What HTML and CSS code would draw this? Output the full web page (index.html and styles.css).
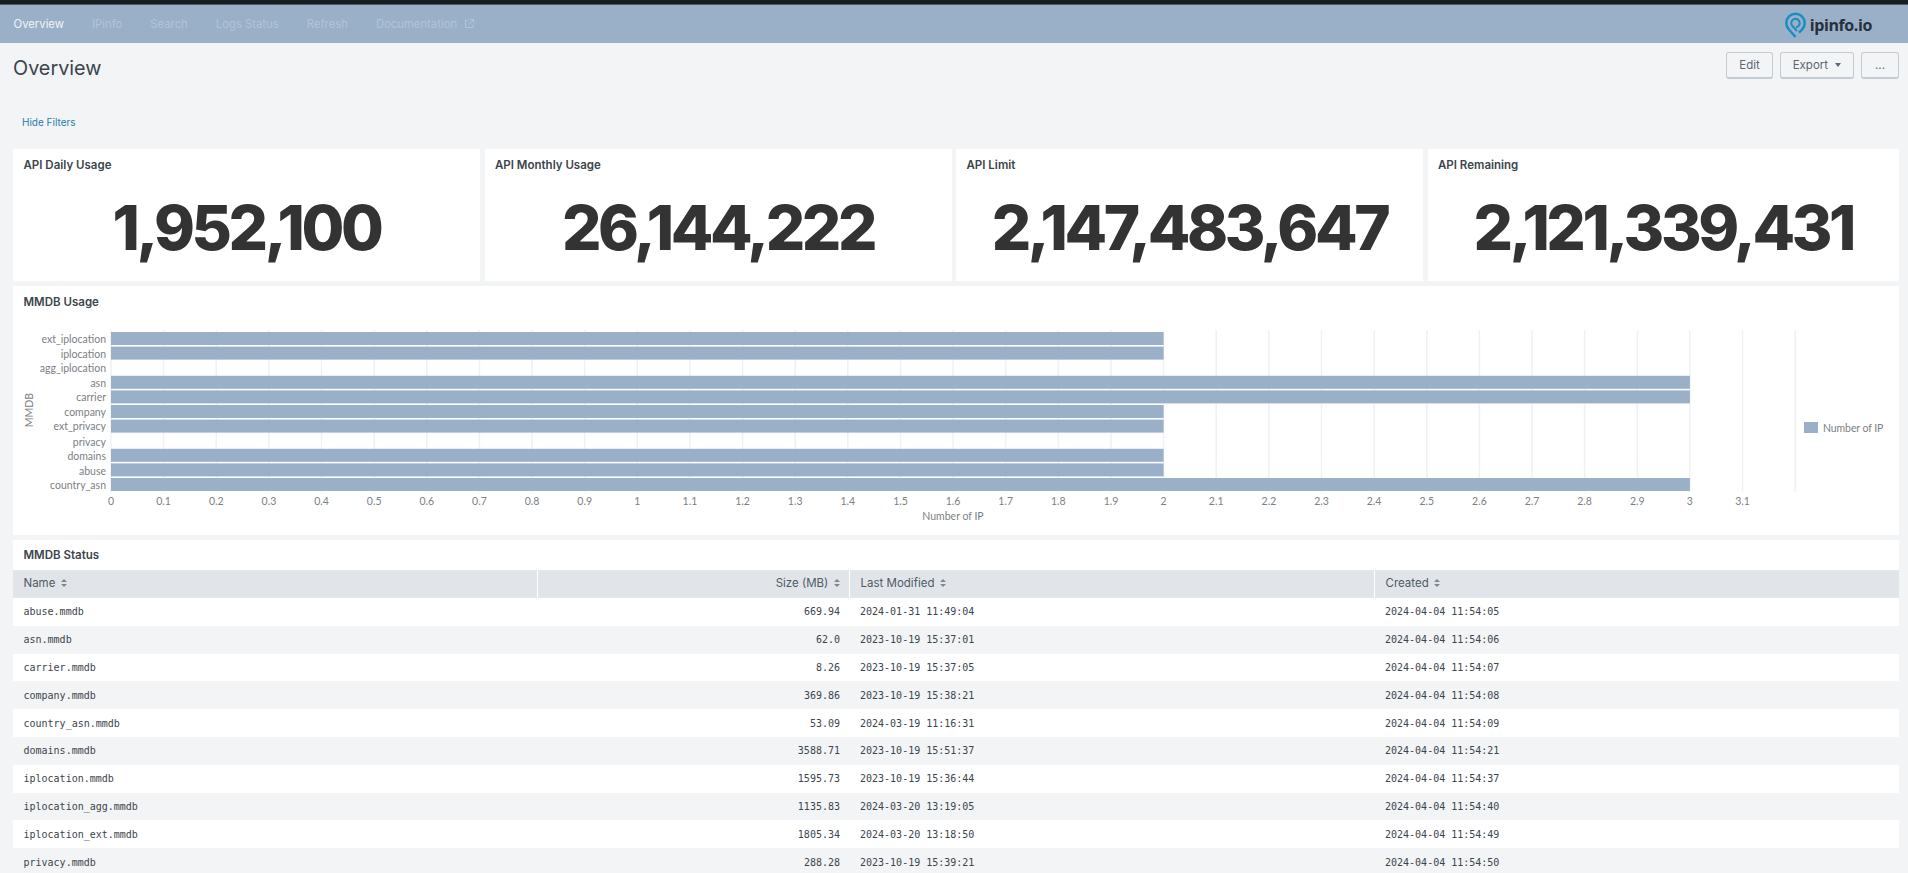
FILE: index.html
```html
<!DOCTYPE html>
<html lang="en">
<head>
    <meta charset="UTF-8">
    <title>Overview | ipinfo.io</title>
    <link rel="stylesheet" href="styles.css">
</head>
<body>

<div class="topbar"></div>

<nav class="nav">
    <div class="nav-links">
        <a class="nav-link active">Overview</a>
        <a class="nav-link">IPinfo</a>
        <a class="nav-link">Search</a>
        <a class="nav-link">Logs Status</a>
        <a class="nav-link">Refresh</a>
        <a class="nav-link">Documentation
            <svg class="ext-icon" width="9" height="9" viewBox="0 0 9 9"><path d="M3.500 1H.5v7.500H8V5.500M5 .5h3.500V4M8.500 .5L3.500 5.500"/></svg>
        </a>
    </div>
    <div class="logo">
        <svg class="logo-pin" width="21" height="26" viewBox="0 0 21 26"><path d="M10.500 25L3.800 17.300A9.200 9.200 0 1 1 17.200 17.300L14 20.700"/><path class="pin-inner" d="M11 15.200A4.200 4.200 0 1 0 7.500 14L12 19"/></svg>
        <span class="logo-text">ipinfo.io</span>
    </div>
</nav>

<main class="page">
    <div class="title-row">
        <h1 class="page-title">Overview</h1>
        <div class="actions">
            <button class="btn btn-edit">Edit</button>
            <button class="btn btn-export">Export <span class="caret"></span></button>
            <button class="btn btn-more">...</button>
        </div>
    </div>

    <a class="hide-filters">Hide Filters</a>

    <div class="stats">
        <section class="panel stat">
            <h2 class="panel-title">API Daily Usage</h2>
            <div class="stat-value">1,952,100</div>
        </section>
        <section class="panel stat">
            <h2 class="panel-title">API Monthly Usage</h2>
            <div class="stat-value">26,144,222</div>
        </section>
        <section class="panel stat">
            <h2 class="panel-title">API Limit</h2>
            <div class="stat-value">2,147,483,647</div>
        </section>
        <section class="panel stat">
            <h2 class="panel-title">API Remaining</h2>
            <div class="stat-value">2,121,339,431</div>
        </section>
    </div>

    <section class="panel chart-panel">
        <h2 class="panel-title">MMDB Usage</h2>
        <svg class="chart" width="1886" height="215" viewBox="0 0 1886 215">
            <g class="grid">
                <path d="M98 10V172M150.600 10V172M203.300 10V172M255.900 10V172M308.500 10V172M361.200 10V172M413.800 10V172M466.400 10V172M519 10V172M571.700 10V172M624.300 10V172M676.900 10V172M729.600 10V172M782.200 10V172M834.800 10V172M887.500 10V172M940.100 10V172M992.700 10V172M1045.300 10V172M1098 10V172M1150.600 10V172M1203.200 10V172M1255.900 10V172M1308.500 10V172M1361.100 10V172M1413.800 10V172M1466.400 10V172M1519 10V172M1571.600 10V172M1624.300 10V172M1676.900 10V172M1729.500 10V172M1782.200 10V172"/>
            </g>
            <g class="bars">
                <rect x="98" y="12" width="1052.600" height="13"/>
                <rect x="98" y="26.600" width="1052.600" height="13"/>
                <rect x="98" y="55.800" width="1578.900" height="13"/>
                <rect x="98" y="70.400" width="1578.900" height="13"/>
                <rect x="98" y="85" width="1052.600" height="13"/>
                <rect x="98" y="99.600" width="1052.600" height="13"/>
                <rect x="98" y="128.800" width="1052.600" height="13"/>
                <rect x="98" y="143.400" width="1052.600" height="13"/>
                <rect x="98" y="158" width="1578.900" height="13"/>
            </g>
            <g class="cat-labels">
                <text x="93" y="23">ext_iplocation</text>
                <text x="93" y="38">iplocation</text>
                <text x="93" y="52">agg_iplocation</text>
                <text x="93" y="67">asn</text>
                <text x="93" y="81">carrier</text>
                <text x="93" y="96">company</text>
                <text x="93" y="110">ext_privacy</text>
                <text x="93" y="126">privacy</text>
                <text x="93" y="140">domains</text>
                <text x="93" y="155">abuse</text>
                <text x="93" y="169">country_asn</text>
            </g>
            <g class="tick-labels">
                <text x="98" y="185">0</text>
                <text x="150.600" y="185">0.1</text>
                <text x="203.300" y="185">0.2</text>
                <text x="255.900" y="185">0.3</text>
                <text x="308.500" y="185">0.4</text>
                <text x="361.200" y="185">0.5</text>
                <text x="413.800" y="185">0.6</text>
                <text x="466.400" y="185">0.7</text>
                <text x="519" y="185">0.8</text>
                <text x="571.700" y="185">0.9</text>
                <text x="624.300" y="185">1</text>
                <text x="676.900" y="185">1.1</text>
                <text x="729.600" y="185">1.2</text>
                <text x="782.200" y="185">1.3</text>
                <text x="834.800" y="185">1.4</text>
                <text x="887.500" y="185">1.5</text>
                <text x="940.100" y="185">1.6</text>
                <text x="992.700" y="185">1.7</text>
                <text x="1045.300" y="185">1.8</text>
                <text x="1098" y="185">1.9</text>
                <text x="1150.600" y="185">2</text>
                <text x="1203.200" y="185">2.1</text>
                <text x="1255.900" y="185">2.2</text>
                <text x="1308.500" y="185">2.3</text>
                <text x="1361.100" y="185">2.4</text>
                <text x="1413.800" y="185">2.5</text>
                <text x="1466.400" y="185">2.6</text>
                <text x="1519" y="185">2.7</text>
                <text x="1571.600" y="185">2.8</text>
                <text x="1624.300" y="185">2.9</text>
                <text x="1676.900" y="185">3</text>
                <text x="1729.500" y="185">3.1</text>
            </g>
            <text class="axis-title" x="940" y="200">Number of IP</text>
            <text class="axis-title" transform="translate(20 90) rotate(-90)">MMDB</text>
            <rect class="legend-swatch" x="1791" y="102" width="14" height="11"/>
            <text class="legend-label" x="1810" y="112">Number of IP</text>
        </svg>
    </section>

    <section class="panel table-panel">
        <h2 class="panel-title">MMDB Status</h2>
        <table class="status-table">
            <colgroup>
                <col class="col-name">
                <col class="col-size">
                <col class="col-date">
                <col class="col-date">
            </colgroup>
            <thead>
                <tr>
                    <th>Name <span class="sort"></span></th>
                    <th class="num">Size (MB) <span class="sort"></span></th>
                    <th>Last Modified <span class="sort"></span></th>
                    <th>Created <span class="sort"></span></th>
                </tr>
            </thead>
            <tbody>
                <tr><td>abuse.mmdb</td><td class="num">669.94</td><td>2024-01-31 11:49:04</td><td>2024-04-04 11:54:05</td></tr>
                <tr><td>asn.mmdb</td><td class="num">62.0</td><td>2023-10-19 15:37:01</td><td>2024-04-04 11:54:06</td></tr>
                <tr><td>carrier.mmdb</td><td class="num">8.26</td><td>2023-10-19 15:37:05</td><td>2024-04-04 11:54:07</td></tr>
                <tr><td>company.mmdb</td><td class="num">369.86</td><td>2023-10-19 15:38:21</td><td>2024-04-04 11:54:08</td></tr>
                <tr><td>country_asn.mmdb</td><td class="num">53.09</td><td>2024-03-19 11:16:31</td><td>2024-04-04 11:54:09</td></tr>
                <tr><td>domains.mmdb</td><td class="num">3588.71</td><td>2023-10-19 15:51:37</td><td>2024-04-04 11:54:21</td></tr>
                <tr><td>iplocation.mmdb</td><td class="num">1595.73</td><td>2023-10-19 15:36:44</td><td>2024-04-04 11:54:37</td></tr>
                <tr><td>iplocation_agg.mmdb</td><td class="num">1135.83</td><td>2024-03-20 13:19:05</td><td>2024-04-04 11:54:40</td></tr>
                <tr><td>iplocation_ext.mmdb</td><td class="num">1805.34</td><td>2024-03-20 13:18:50</td><td>2024-04-04 11:54:49</td></tr>
                <tr><td>privacy.mmdb</td><td class="num">288.28</td><td>2023-10-19 15:39:21</td><td>2024-04-04 11:54:50</td></tr>
            </tbody>
        </table>
    </section>
</main>

</body>
</html>
```

FILE: styles.css
```css
html, body {
    height: 100%;
    overflow: hidden;
}
body {
    margin: 0;
    font-family: Inter, Lato, sans-serif;
    background-color: #f2f4f5;
    color: #3c444d;
}

.topbar {
    height: 4px;
    background: #171d21;
    border-bottom: 1px solid #4d5a66;
}

.nav {
    height: 38px;
    background: #9aafc8;
    display: flex;
    justify-content: space-between;
    align-items: center;
    padding: 0 36px 0 13.500px;
}
.nav-links {
    display: flex;
    gap: 28px;
    margin-top: -1px;
}
.nav-link {
    font-size: 11.300px;
    color: #b4c4d7;
}
.nav-link.active {
    color: #f2f4f5;
}
.ext-icon {
    margin-left: 5px;
    fill: none;
    stroke: #b4c4d7;
    stroke-width: 1;
}
.logo {
    display: flex;
    align-items: center;
    gap: 4px;
    margin-top: 1px;
}
.logo-pin {
    fill: none;
    stroke: #1a8dc2;
    stroke-width: 2.500;
}
.pin-inner {
    stroke-width: 2;
}
.logo-text {
    font-family: "Open Sans", sans-serif;
    font-size: 16px;
    font-weight: 700;
    letter-spacing: -0.4px;
    color: #26303d;
}

.page {
    padding: 0 9px 0 13px;
}
.title-row {
    display: flex;
    justify-content: space-between;
    padding-top: 9px;
    height: 27px;
}
.page-title {
    margin: 4px 0 0;
    font-size: 19.800px;
    font-weight: 400;
    line-height: 24px;
    color: #3c444d;
}
.actions {
    display: flex;
    gap: 7px;
}
.btn {
    height: 27px;
    padding: 0;
    background: #f2f4f5;
    border: 1px solid #c3cbd4;
    border-bottom-width: 2px;
    border-radius: 3px;
    font-family: Inter, Lato, sans-serif;
    font-size: 11.500px;
    color: #5c6773;
}
.btn-edit {
    width: 47px;
}
.btn-export {
    width: 74px;
}
.btn-more {
    width: 38px;
}
.caret {
    display: inline-block;
    width: 0;
    height: 0;
    margin: 0 0 2px 4px;
    border-left: 3px solid transparent;
    border-right: 3px solid transparent;
    border-top: 4px solid #5c6773;
}

.hide-filters {
    display: block;
    margin: 36px 0 0 9px;
    height: 34px;
    font-size: 10px;
    line-height: 14px;
    color: #1f7eac;
}

.panel {
    background: #fff;
}
.panel-title {
    margin: 0;
    padding: 9px 10.500px 0;
    font-size: 11.500px;
    font-weight: 600;
    line-height: 15px;
    color: #3c444d;
}

.stats {
    display: grid;
    grid-template-columns: repeat(3, 467px) 1fr;
    gap: 4.500px;
}
.stat {
    height: 132px;
}
.stat-value {
    margin-top: 18px;
    text-align: center;
    font-size: 62px;
    font-weight: 800;
    line-height: 74px;
    letter-spacing: -3.400px;
    color: #333;
}

.chart-panel {
    margin-top: 5px;
    height: 249px;
}
.chart {
    display: block;
    margin-top: 10px;
}
.grid path {
    fill: none;
    stroke: #eff1f3;
    stroke-width: 1.500;
}
.bars rect, .legend-swatch {
    fill: #9aafc8;
}
.chart text {
    font-family: Lato, sans-serif;
    font-size: 10.500px;
    fill: #7b7f84;
}
.cat-labels text {
    text-anchor: end;
}
.tick-labels text, .axis-title {
    text-anchor: middle;
}
.chart .legend-label {
    letter-spacing: -0.1px;
}

.table-panel {
    margin-top: 5px;
}
.table-panel .panel-title {
    height: 22px;
    padding-top: 8px;
}
.status-table {
    width: 100%;
    table-layout: fixed;
    border-collapse: collapse;
}
.col-name {
    width: 524px;
}
.col-size {
    width: 312px;
}
.status-table th {
    box-sizing: border-box;
    height: 28px;
    padding: 0 9px 2px 11px;
    background: #e1e5e9;
    border-left: 1px solid #fff;
    font-size: 11.500px;
    font-weight: 400;
    text-align: left;
    color: #4f5a66;
}
.status-table th:first-child {
    border-left: 0;
    padding-left: 10.500px;
}
.status-table td {
    height: 27.800px;
    padding: 0 9px 0 11px;
    font-family: "DejaVu Sans Mono", monospace;
    font-size: 10px;
    color: #3c444d;
}
.status-table td:first-child {
    padding-left: 10.500px;
}
.status-table .num {
    text-align: right;
}
.status-table tbody tr:nth-child(even) td {
    background: #f2f4f5;
}
.sort {
    display: inline-block;
    width: 6px;
    height: 9px;
    margin-left: 2px;
    position: relative;
    top: 1px;
}
.sort::before, .sort::after {
    content: "";
    position: absolute;
    left: 0;
    border-left: 3px solid transparent;
    border-right: 3px solid transparent;
}
.sort::before {
    top: 0;
    border-bottom: 3px solid #7d8791;
}
.sort::after {
    top: 5px;
    border-top: 3px solid #7d8791;
}
```
